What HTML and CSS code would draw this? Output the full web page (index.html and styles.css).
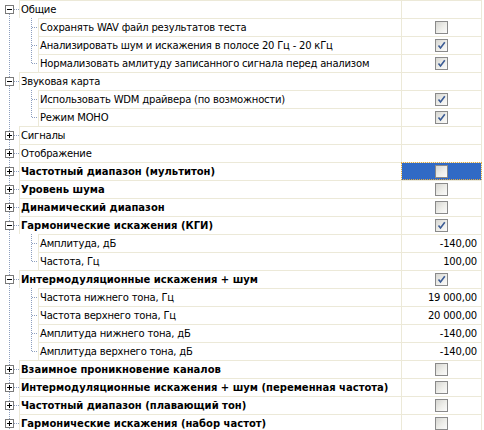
FILE: index.html
```html
<!DOCTYPE html>
<html>
<head>
<meta charset="utf-8">
<link rel="stylesheet" href="styles.css">
</head>
<body>
<div class="grid">
  <div class="row root first">
    <div class="tree"><svg class="exp" width="9" height="9" viewBox="0 0 9 9"><rect x="0.5" y="0.5" width="8" height="8" fill="#fff" stroke="#7a7a7a"/><path d="M2 4.5H7" stroke="#000"/></svg></div>
    <div class="name">Общие</div>
    <div class="value"></div>
  </div>
  <div class="row child">
    <div class="tree"></div>
    <div class="name">Сохранять WAV файл результатов теста</div>
    <div class="value"><span class="cb"></span></div>
  </div>
  <div class="row child">
    <div class="tree"></div>
    <div class="name">Анализировать шум и искажения в полосе 20 Гц - 20 кГц</div>
    <div class="value"><span class="cb on"><svg width="9" height="9" viewBox="0 0 9 9"><path d="M1.5 4.5L3.5 7L7.8 1.2" fill="none" stroke="#3b5b94" stroke-width="1.6"/></svg></span></div>
  </div>
  <div class="row child last">
    <div class="tree"></div>
    <div class="name">Нормализовать амлитуду записанного сигнала перед анализом</div>
    <div class="value"><span class="cb on"><svg width="9" height="9" viewBox="0 0 9 9"><path d="M1.5 4.5L3.5 7L7.8 1.2" fill="none" stroke="#3b5b94" stroke-width="1.6"/></svg></span></div>
  </div>
  <div class="row root">
    <div class="tree"><svg class="exp" width="9" height="9" viewBox="0 0 9 9"><rect x="0.5" y="0.5" width="8" height="8" fill="#fff" stroke="#7a7a7a"/><path d="M2 4.5H7" stroke="#000"/></svg></div>
    <div class="name">Звуковая карта</div>
    <div class="value"></div>
  </div>
  <div class="row child">
    <div class="tree"></div>
    <div class="name">Использовать WDM драйвера (по возможности)</div>
    <div class="value"><span class="cb on"><svg width="9" height="9" viewBox="0 0 9 9"><path d="M1.5 4.5L3.5 7L7.8 1.2" fill="none" stroke="#3b5b94" stroke-width="1.6"/></svg></span></div>
  </div>
  <div class="row child last">
    <div class="tree"></div>
    <div class="name">Режим МОНО</div>
    <div class="value"><span class="cb on"><svg width="9" height="9" viewBox="0 0 9 9"><path d="M1.5 4.5L3.5 7L7.8 1.2" fill="none" stroke="#3b5b94" stroke-width="1.6"/></svg></span></div>
  </div>
  <div class="row root">
    <div class="tree"><svg class="exp" width="9" height="9" viewBox="0 0 9 9"><rect x="0.5" y="0.5" width="8" height="8" fill="#fff" stroke="#7a7a7a"/><path d="M2 4.5H7M4.5 2V7" stroke="#000"/></svg></div>
    <div class="name">Сигналы</div>
    <div class="value"></div>
  </div>
  <div class="row root">
    <div class="tree"><svg class="exp" width="9" height="9" viewBox="0 0 9 9"><rect x="0.5" y="0.5" width="8" height="8" fill="#fff" stroke="#7a7a7a"/><path d="M2 4.5H7M4.5 2V7" stroke="#000"/></svg></div>
    <div class="name">Отображение</div>
    <div class="value"></div>
  </div>
  <div class="row root">
    <div class="tree"><svg class="exp" width="9" height="9" viewBox="0 0 9 9"><rect x="0.5" y="0.5" width="8" height="8" fill="#fff" stroke="#7a7a7a"/><path d="M2 4.5H7M4.5 2V7" stroke="#000"/></svg></div>
    <div class="name bold">Частотный диапазон (мультитон)</div>
    <div class="value selected"><span class="cb"></span></div>
  </div>
  <div class="row root">
    <div class="tree"><svg class="exp" width="9" height="9" viewBox="0 0 9 9"><rect x="0.5" y="0.5" width="8" height="8" fill="#fff" stroke="#7a7a7a"/><path d="M2 4.5H7M4.5 2V7" stroke="#000"/></svg></div>
    <div class="name bold">Уровень шума</div>
    <div class="value"><span class="cb"></span></div>
  </div>
  <div class="row root">
    <div class="tree"><svg class="exp" width="9" height="9" viewBox="0 0 9 9"><rect x="0.5" y="0.5" width="8" height="8" fill="#fff" stroke="#7a7a7a"/><path d="M2 4.5H7M4.5 2V7" stroke="#000"/></svg></div>
    <div class="name bold">Динамический диапазон</div>
    <div class="value"><span class="cb"></span></div>
  </div>
  <div class="row root">
    <div class="tree"><svg class="exp" width="9" height="9" viewBox="0 0 9 9"><rect x="0.5" y="0.5" width="8" height="8" fill="#fff" stroke="#7a7a7a"/><path d="M2 4.5H7" stroke="#000"/></svg></div>
    <div class="name bold">Гармонические искажения (КГИ)</div>
    <div class="value"><span class="cb on"><svg width="9" height="9" viewBox="0 0 9 9"><path d="M1.5 4.5L3.5 7L7.8 1.2" fill="none" stroke="#3b5b94" stroke-width="1.6"/></svg></span></div>
  </div>
  <div class="row child">
    <div class="tree"></div>
    <div class="name">Амплитуда, дБ</div>
    <div class="value num">-140,00</div>
  </div>
  <div class="row child last">
    <div class="tree"></div>
    <div class="name">Частота, Гц</div>
    <div class="value num">100,00</div>
  </div>
  <div class="row root">
    <div class="tree"><svg class="exp" width="9" height="9" viewBox="0 0 9 9"><rect x="0.5" y="0.5" width="8" height="8" fill="#fff" stroke="#7a7a7a"/><path d="M2 4.5H7" stroke="#000"/></svg></div>
    <div class="name bold">Интермодуляционные искажения + шум</div>
    <div class="value"><span class="cb on"><svg width="9" height="9" viewBox="0 0 9 9"><path d="M1.5 4.5L3.5 7L7.8 1.2" fill="none" stroke="#3b5b94" stroke-width="1.6"/></svg></span></div>
  </div>
  <div class="row child">
    <div class="tree"></div>
    <div class="name">Частота нижнего тона, Гц</div>
    <div class="value num">19 000,00</div>
  </div>
  <div class="row child">
    <div class="tree"></div>
    <div class="name">Частота верхнего тона, Гц</div>
    <div class="value num">20 000,00</div>
  </div>
  <div class="row child">
    <div class="tree"></div>
    <div class="name">Амплитуда нижнего тона, дБ</div>
    <div class="value num">-140,00</div>
  </div>
  <div class="row child last">
    <div class="tree"></div>
    <div class="name">Амплитуда верхнего тона, дБ</div>
    <div class="value num">-140,00</div>
  </div>
  <div class="row root">
    <div class="tree"><svg class="exp" width="9" height="9" viewBox="0 0 9 9"><rect x="0.5" y="0.5" width="8" height="8" fill="#fff" stroke="#7a7a7a"/><path d="M2 4.5H7M4.5 2V7" stroke="#000"/></svg></div>
    <div class="name bold">Взаимное проникновение каналов</div>
    <div class="value"><span class="cb"></span></div>
  </div>
  <div class="row root">
    <div class="tree"><svg class="exp" width="9" height="9" viewBox="0 0 9 9"><rect x="0.5" y="0.5" width="8" height="8" fill="#fff" stroke="#7a7a7a"/><path d="M2 4.5H7M4.5 2V7" stroke="#000"/></svg></div>
    <div class="name bold">Интермодуляционные искажения + шум (переменная частота)</div>
    <div class="value"><span class="cb"></span></div>
  </div>
  <div class="row root">
    <div class="tree"><svg class="exp" width="9" height="9" viewBox="0 0 9 9"><rect x="0.5" y="0.5" width="8" height="8" fill="#fff" stroke="#7a7a7a"/><path d="M2 4.5H7M4.5 2V7" stroke="#000"/></svg></div>
    <div class="name bold">Частотный диапазон (плавающий тон)</div>
    <div class="value"><span class="cb"></span></div>
  </div>
  <div class="row root">
    <div class="tree"><svg class="exp" width="9" height="9" viewBox="0 0 9 9"><rect x="0.5" y="0.5" width="8" height="8" fill="#fff" stroke="#7a7a7a"/><path d="M2 4.5H7M4.5 2V7" stroke="#000"/></svg></div>
    <div class="name bold">Гармонические искажения (набор частот)</div>
    <div class="value"><span class="cb"></span></div>
  </div>
</div>
</body>
</html>
```

FILE: styles.css
```css
html, body {
  margin: 0;
  padding: 0;
  background: #fff;
}
body {
  font-family: "DejaVu Sans", "Liberation Sans", sans-serif;
  font-size: 10px;
  color: #000;
  overflow: hidden;
}
.grid {
  width: 482px;
}
.row {
  display: flex;
  height: 18px;
}
.tree {
  flex: none;
  height: 18px;
  --dot: repeating-linear-gradient(to bottom, #8d9fbf 0 1px, transparent 1px 2px);
  --hdot: repeating-linear-gradient(to right, #8d9fbf 0 1px, transparent 1px 2px);
}
.root .tree {
  width: 19px;
  background:
    var(--hdot) 14px 9px / 5px 1px no-repeat,
    var(--dot) 9px 0 / 1px 18px no-repeat;
}
.root.first .tree {
  background:
    var(--hdot) 14px 9px / 5px 1px no-repeat,
    var(--dot) 9px 14px / 1px 4px no-repeat;
}
.exp {
  display: block;
  margin: 5px 0 0 5px;
}
.child .tree {
  width: 38px;
  background:
    var(--hdot) 32px 9px / 6px 1px no-repeat,
    var(--dot) 31px 0 / 1px 18px no-repeat,
    var(--dot) 9px 0 / 1px 18px no-repeat;
}
.child.last .tree {
  background:
    var(--hdot) 32px 9px / 6px 1px no-repeat,
    var(--dot) 31px 0 / 1px 10px no-repeat,
    var(--dot) 9px 0 / 1px 18px no-repeat;
}
.name {
  flex: 1;
  min-width: 0;
  border-top: 1px solid #ece9d8;
  border-left: 1px solid #ece9d8;
  padding-left: 1px;
  line-height: 17px;
  white-space: nowrap;
  overflow: hidden;
  letter-spacing: -0.2px;
}
.bold {
  font-weight: bold;
  letter-spacing: 0;
}
.value {
  flex: none;
  width: 79px;
  border-top: 1px solid #ece9d8;
  border-left: 1px solid #ece9d8;
  border-right: 1px solid #ece9d8;
  display: flex;
  align-items: center;
  justify-content: center;
  line-height: 17px;
}
.value.num {
  justify-content: flex-end;
  padding-right: 4px;
  width: 75px;
  letter-spacing: -0.2px;
}
.value.selected {
  background: #316ac5;
  outline: 1px dotted #e0a840;
  outline-offset: -1px;
}
.cb {
  display: flex;
  align-items: center;
  justify-content: center;
  width: 11px;
  height: 11px;
  border: 1px solid #8a8a8a;
  background: linear-gradient(135deg, #d6d6d2 0%, #eeeeea 55%, #fbfbfb 100%);
}
.cb svg {
  display: block;
}
```
